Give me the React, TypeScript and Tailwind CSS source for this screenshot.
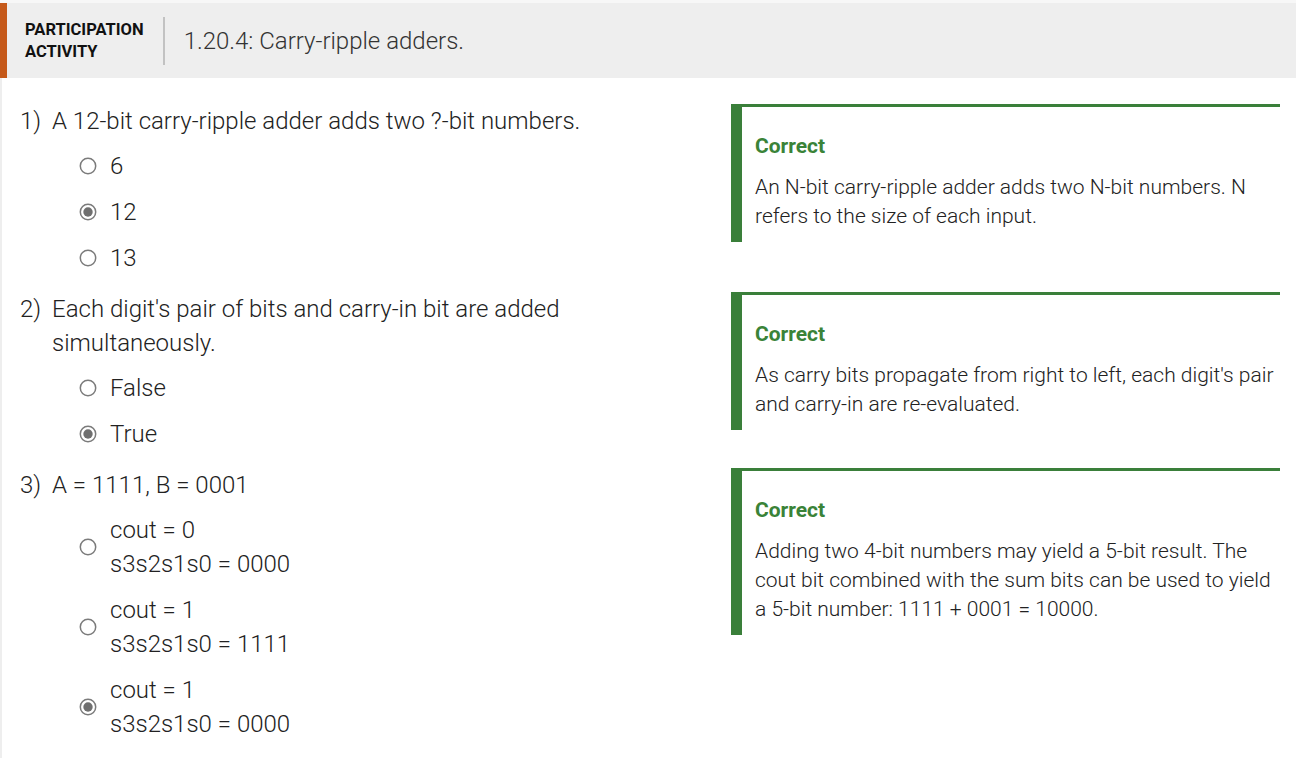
import React from 'react';

type Option = { lines: string[]; checked?: boolean };
type Question = { num: string; text: string; options: Option[]; feedback: string };

const questions: Question[] = [
  {
    num: '1)',
    text: 'A 12-bit carry-ripple adder adds two ?-bit numbers.',
    options: [{ lines: ['6'] }, { lines: ['12'], checked: true }, { lines: ['13'] }],
    feedback: 'An N-bit carry-ripple adder adds two N-bit numbers. N refers to the size of each input.',
  },
  {
    num: '2)',
    text: "Each digit's pair of bits and carry-in bit are added simultaneously.",
    options: [{ lines: ['False'] }, { lines: ['True'], checked: true }],
    feedback: "As carry bits propagate from right to left, each digit's pair and carry-in are re-evaluated.",
  },
  {
    num: '3)',
    text: 'A = 1111, B = 0001',
    options: [
      { lines: ['cout = 0', 's3s2s1s0 = 0000'] },
      { lines: ['cout = 1', 's3s2s1s0 = 1111'] },
      { lines: ['cout = 1', 's3s2s1s0 = 0000'], checked: true },
    ],
    feedback:
      'Adding two 4-bit numbers may yield a 5-bit result. The cout bit combined with the sum bits can be used to yield a 5-bit number: 1111 + 0001 = 10000.',
  },
];

function Radio({ checked }: { checked?: boolean }) {
  return (
    <svg width="18" height="18" viewBox="0 0 18 18" className="shrink-0">
      <circle cx="9" cy="9" r="7.7" fill="white" stroke="#7b7b7b" strokeWidth="1.5" />
      {checked && <circle cx="9" cy="9" r="4.7" fill="#6f6f6f" />}
    </svg>
  );
}

function Feedback({ text }: { text: string }) {
  return (
    <div className="w-[549px] shrink-0 border-t-[3px] border-l-[11px] border-[#3a7f3a] pl-[13px] pr-[3px] pt-[24px] pb-[11px]">
      <div className="text-[21px] leading-[30px] font-bold text-[#3a8338]">Correct</div>
      <p className="mt-[12px] text-[21px] leading-[29px] font-light text-[#222]">{text}</p>
    </div>
  );
}

export default function App() {
  return (
    <div className="min-h-screen bg-white font-['Roboto',sans-serif] text-[#222]">
      <div className="h-[3px] bg-[#f7f7f7]" />
      <div className="flex h-[75px] items-center border-l-[7px] border-[#c5591a] bg-[#eeeeee] pl-[18px]">
        <div className="text-[16.5px] leading-[22px] font-bold text-[#111]">
          PARTICIPATION
          <br />
          ACTIVITY
        </div>
        <div className="ml-[19px] h-[48px] w-[2px] bg-[#c2c2c2]" />
        <div className="ml-[19px] text-[24px] font-light text-[#333]">1.20.4: Carry-ripple adders.</div>
      </div>

      <div className="border-l-2 border-[#eeeeee] pl-[18px] pr-[16px] pt-[26px] pb-[17px]">
        {questions.map((q) => (
          <div key={q.num} className="mb-[17px] flex items-start justify-between">
            <div className="flex w-[600px] text-[24px] leading-[34px] font-light">
              <div className="w-[32px] shrink-0">{q.num}</div>
              <div>
                <div>{q.text}</div>
                <div className="ml-[27px] flex flex-col gap-[12px] pt-[11px]">
                  {q.options.map((o, i) => (
                    <div key={i} className="flex items-center gap-[13px]">
                      <Radio checked={o.checked} />
                      <div>
                        {o.lines.map((l) => (
                          <div key={l}>{l}</div>
                        ))}
                      </div>
                    </div>
                  ))}
                </div>
              </div>
            </div>
            <Feedback text={q.feedback} />
          </div>
        ))}
      </div>
    </div>
  );
}
